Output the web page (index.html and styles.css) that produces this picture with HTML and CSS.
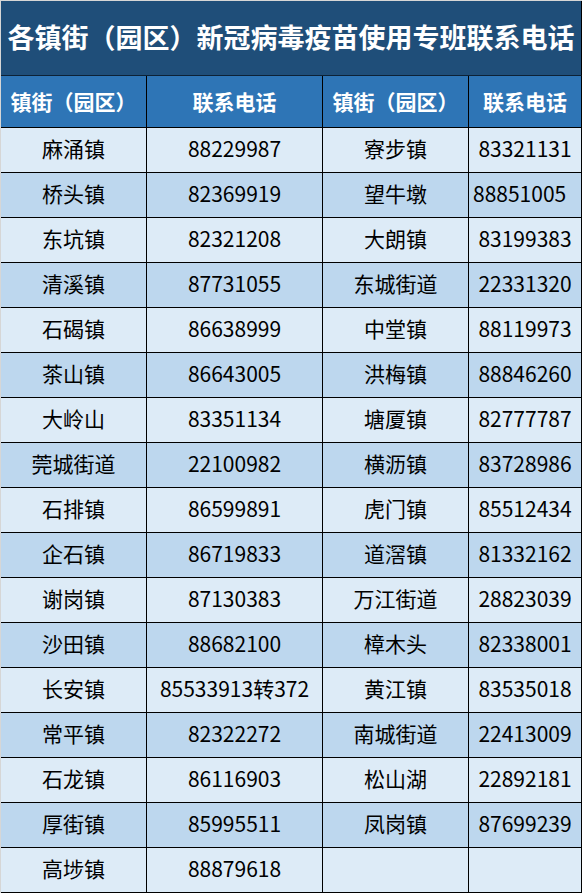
FILE: index.html
```html
<!DOCTYPE html>
<html lang="zh-CN">
<head>
<meta charset="utf-8">
<title>各镇街（园区）新冠病毒疫苗使用专班联系电话</title>
<link rel="stylesheet" href="styles.css">
</head>
<body>
<div class="sheet">
  <div class="title">各镇街（园区）新冠病毒疫苗使用专班联系电话</div>
  <div class="hd">镇街（园区）</div><div class="hd">联系电话</div><div class="hd">镇街（园区）</div><div class="hd">联系电话</div>

  <div class="c">麻涌镇</div><div class="c">88229987</div><div class="c">寮步镇</div><div class="c">83321131</div>
  <div class="c alt">桥头镇</div><div class="c alt">82369919</div><div class="c alt">望牛墩</div><div class="c alt left">88851005</div>
  <div class="c">东坑镇</div><div class="c">82321208</div><div class="c">大朗镇</div><div class="c">83199383</div>
  <div class="c alt">清溪镇</div><div class="c alt">87731055</div><div class="c alt">东城街道</div><div class="c alt">22331320</div>
  <div class="c">石碣镇</div><div class="c">86638999</div><div class="c">中堂镇</div><div class="c">88119973</div>
  <div class="c alt">茶山镇</div><div class="c alt">86643005</div><div class="c alt">洪梅镇</div><div class="c alt">88846260</div>
  <div class="c">大岭山</div><div class="c">83351134</div><div class="c">塘厦镇</div><div class="c">82777787</div>
  <div class="c alt">莞城街道</div><div class="c alt">22100982</div><div class="c alt">横沥镇</div><div class="c alt">83728986</div>
  <div class="c">石排镇</div><div class="c">86599891</div><div class="c">虎门镇</div><div class="c">85512434</div>
  <div class="c alt">企石镇</div><div class="c alt">86719833</div><div class="c alt">道滘镇</div><div class="c alt">81332162</div>
  <div class="c">谢岗镇</div><div class="c">87130383</div><div class="c">万江街道</div><div class="c">28823039</div>
  <div class="c alt">沙田镇</div><div class="c alt">88682100</div><div class="c alt">樟木头</div><div class="c alt">82338001</div>
  <div class="c">长安镇</div><div class="c">85533913转372</div><div class="c">黄江镇</div><div class="c">83535018</div>
  <div class="c alt">常平镇</div><div class="c alt">82322272</div><div class="c alt">南城街道</div><div class="c alt">22413009</div>
  <div class="c">石龙镇</div><div class="c">86116903</div><div class="c">松山湖</div><div class="c">22892181</div>
  <div class="c alt">厚街镇</div><div class="c alt">85995511</div><div class="c alt">凤岗镇</div><div class="c alt">87699239</div>
  <div class="c">高埗镇</div><div class="c">88879618</div><div class="c"></div><div class="c"></div>
</div>
</body>
</html>
```
FILE: styles.css
```css
html, body {
  margin: 0;
  padding: 0;
  background: #d6d6d6;
}
body {
  padding: 1px 0 0 1px;
  font-family: "Noto Sans CJK SC", "Noto Sans", sans-serif;
}
.sheet {
  display: grid;
  grid-template-columns: 146px 176px 146px 113px;
  grid-template-rows: 75px 52px repeat(17, 45px);
  width: 581px;
}
.sheet > div {
  box-sizing: border-box;
  border-right: 1px solid #000;
  border-bottom: 1px solid #000;
  display: flex;
  align-items: center;
  justify-content: center;
  white-space: nowrap;
}
.title {
  grid-column: 1 / -1;
  background: #1f4e79;
  color: #fff;
  font-weight: bold;
  font-size: 27px;
  padding-bottom: 3px;
  border-bottom-color: #0d2236 !important;
}
.hd {
  background: #2e75b6;
  color: #fff;
  font-weight: bold;
  font-size: 21px;
  padding-bottom: 2px;
}
.c {
  background: #ddebf7;
  color: #000;
  font-size: 21px;
  padding-bottom: 4px;
}
.c.alt {
  background: #bdd7ee;
}
.c.left {
  justify-content: flex-start;
  padding-left: 4px;
}
```
